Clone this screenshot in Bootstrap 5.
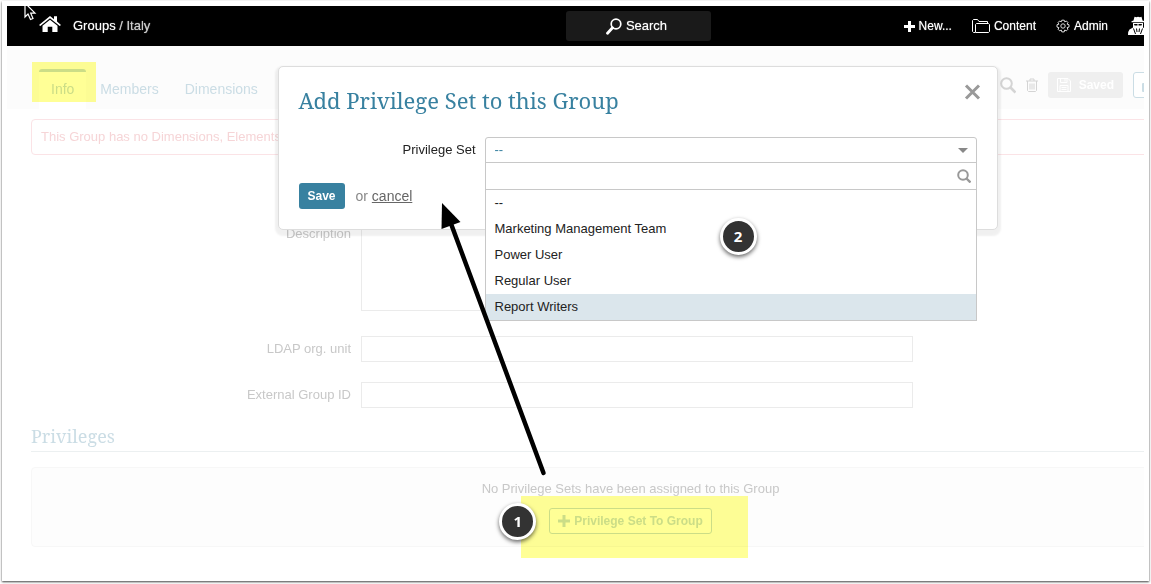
<!DOCTYPE html>
<html lang="en">
<head>
<meta charset="utf-8">
<meta name="viewport" content="width=device-width, initial-scale=1">
<title>Groups / Italy</title>
<link href="https://cdn.jsdelivr.net/npm/bootstrap@5.3.0/dist/css/bootstrap.min.css" rel="stylesheet">
<style>
body { font-family: "Liberation Sans", Arial, sans-serif; font-size: 13px; line-height: 20px; color: #222; background: #fff; }
a { text-decoration: none; }
svg { display: block; flex: none; }
.serif { font-family: "Noto Serif", "Droid Serif", "DejaVu Serif Condensed", "DejaVu Serif", serif; font-weight: 400; }

/* framed capture with the page clipped at its right edge */
.shot { min-height: calc(100vh - 4px); margin: 1px 2px 3px; padding: 5px; background: #fff; box-shadow: 0 1px 2px rgba(0,0,0,.75); }
.viewport { overflow: hidden; }
.canvas { margin-right: -126px; min-height: 564px; }

.topbar { height: 40px; background: #000; color: #fff; padding: 0 122px 0 32px; text-shadow: 0 0 1px rgba(255,255,255,.7); }
.topbar a { color: #fff; }
.topbar .here { color: #ccc; }
.topbar-side { flex: 1 1 0; }
.topbar-side.start { margin-right: 90px; }
.main-nav { font-size: 12px; gap: 20px; }
.search-btn { width: 145px; height: 30px; background: #1a1a1a; color: #fff; border: 0; border-radius: 3px; text-shadow: inherit; gap: 4px; padding: 0 10px 0 6px; }
.pointer { left: 17px; top: -4px; }

.tabbar { background: #fcfcfc; height: 63px; padding: 0 24px 0 32px; }
.tab { font-size: 14px; line-height: 20px; padding: 10px 12px; color: #cbdde5; height: 40px; }
.tab.on { background: #fff; border-top: 3px solid #cbdde5; border-radius: 3px 3px 0 0; padding-top: 7px; }
.marker { background: #ffff96; mix-blend-mode: multiply; pointer-events: none; }
.tab .marker { left: -7px; top: -10px; width: 64px; height: 40px; }
.tools { color: #d4d4d4; gap: 10px; padding-bottom: 11px; }
.pill { height: 26px; font-size: 12px; font-weight: 700; border-radius: 3px; border: 1px solid transparent; padding: 0 8px; line-height: 20px; }
.saved { background: #efefef; color: #fff; }
.lock-btn { width: 113px; border-color: #cbdde5; background: #fff; color: #cbdde5; }

.main { padding: 10px 40px 0 24px; }
.notice { border: 1px solid #fbe3e6; border-radius: 4px; color: #f6d5d7; padding: 7px 9px; line-height: 20px; }
.fields { margin-top: 66px; gap: 20px; }
.fields label { width: 320px; text-align: right; padding-top: 3px; color: #c8c8c8; }
.fields .form-control { width: 552px; height: 26px; min-height: 26px; padding: 2px 8px; border-color: #ebebeb; border-radius: 0; font-size: 13px; }
.fields textarea.form-control { height: 90px; margin-bottom: 5px; resize: none; }
.section-title { font-size: 18px; line-height: 28px; color: #cbdde5; border-bottom: 1px solid #ecf0f1; margin: 14px -40px 15px 0; padding-bottom: 1px; }
.empty { border: 1px solid #f7f7f7; border-radius: 4px; padding: 11px 0 12px; color: #c8c8c8; background: #fdfdfd; }
.add-btn { border-color: #cbdde5; background: #fff; color: #cbdde5; margin-top: 9px; }
.add-wrap .marker { left: -28px; top: -3px; width: 227px; height: 62px; }
.step { width: 37px; height: 37px; border-radius: 50%; border: 3px solid #fff; background: #333; color: #fff; font: 700 15px/30px "Open Sans", "Noto Sans", sans-serif; text-align: center; box-shadow: 0 2px 4px rgba(0,0,0,.6); }
.add-wrap .step { left: -50px; top: 4px; }

.overlay { top: 60px; left: 0; right: 2px; }
.dialog { width: 720px; height: 164px; padding: 17px 20px 20px; background: #fff; border: 1px solid #ddd; border-radius: 5px; box-shadow: 0 3px 2px 3px rgba(0,0,0,.06); }
.dialog h1 { font-size: 22px; line-height: 32px; color: #3881a0; margin: 0; }
.x-btn { border: 0; background: none; padding: 0; margin-right: -4px; color: #999; }
.set-row { margin-top: 21px; }
.set-row label { width: 177px; text-align: right; line-height: 26px; }
.picker { width: 492px; }
.picker .form-select { height: 26px; padding: 0 30px 0 9px; font-size: 13px; line-height: 24px; color: #3881a0; border-color: #c8c8c8; border-radius: 3px 3px 0 0; background-image: none; }
.caret { right: 9px; top: 11px; color: #888; pointer-events: none; }
.menu { top: 25px; left: 0; right: 0; border: 1px solid #c8c8c8; background: #fff; }
.menu .form-control { height: 27px; min-height: 27px; padding: 0 30px 0 9px; font-size: 13px; border: 0; border-bottom: 1px solid #c8c8c8; border-radius: 0; }
.menu .glass { right: 5px; top: 6px; color: #999; }
.menu .list-group-item { border: 0; padding: 3px 9px; line-height: 20px; color: #222; }
.menu .list-group-item.picked { background: #dbe6ec; }
.menu .step { left: 234px; top: 55px; }
.actions { margin-top: 20px; font-size: 14px; color: #888; gap: 11px; }
.actions .pill { background: #3881a0; color: #fff; width: 46px; height: 26px; padding: 0; }
.actions a { color: #666; text-decoration: underline; }
.pointing { left: 158px; top: 134px; pointer-events: none; }
</style>
</head>
<body>
<div class="shot">
<div class="viewport">
<div class="canvas position-relative">

  <header class="topbar position-relative d-flex align-items-center">
    <svg class="pointer position-absolute" width="13" height="19" viewBox="0 0 13 19"><path d="M1 1v14l3-3 2.500 5.500 2.500-1-2.300-5.300H11z" fill="#000" stroke="#fff" stroke-width="1.200"/></svg>
    <nav class="topbar-side start d-flex align-items-center" aria-label="Breadcrumb">
      <a href="#" aria-label="Home"><svg class="mb-1" width="22" height="18" viewBox="0 0 22 20" preserveAspectRatio="none" fill="#fff"><path d="M11 1 0 11l1.300 1.300L11 3.600l9.700 8.700L22 11l-4-3.700V1.500h-3v3.100z"/><path d="M11 5.300 3.500 12v7h5.200v-6h4.600v6h5.200v-7z"/></svg></a>
      <span class="ms-2 ps-1"><a href="#">Groups</a> <span class="here">/ Italy</span></span>
    </nav>
    <button type="button" class="search-btn d-flex align-items-center justify-content-center">
      <svg width="16" height="17" viewBox="0 0 16 17" fill="none" stroke="#fff"><circle cx="10" cy="6" r="4.800" stroke-width="1.700"/><path d="m6.500 9.800-5 5.500" stroke-width="2.800" stroke-linecap="round"/></svg>Search</button>
    <nav class="main-nav topbar-side d-flex align-items-center justify-content-end" aria-label="Main">
      <a href="#" class="d-flex align-items-center gap-1"><svg width="11" height="11" viewBox="0 0 11 11"><path d="M5.500 0v11M0 5.500h11" stroke="#fff" stroke-width="3"/></svg>New...</a>
      <a href="#" class="d-flex align-items-center gap-1"><svg width="18" height="15" viewBox="0 0 18 15" fill="none" stroke="#fff"><path d="M3 13.500H1.500l-1-1v-11l1-1h4l1.500 2h8.500v2M3.500 13.500v-8l1-1h12l1 1v7l-1 1z"/></svg>Content</a>
      <a href="#" class="d-flex align-items-center gap-1"><svg width="14" height="14" viewBox="0 0 14 14" fill="none" stroke="#ddd"><circle cx="7" cy="7" r="2.200"/><path d="M5.800.5h2.400l.5 1.600 1.700-.8 1.500 1.500-.8 1.700 1.900.5v2.400l-1.900.5.8 1.700-1.500 1.500-1.700-.8-.5 1.900H5.800l-.5-1.900-1.700.8-1.500-1.500.8-1.700L1 7.400V5l1.900-.5-.8-1.700 1.500-1.500 1.700.8z" transform="translate(0 .7)"/></svg>Admin</a>
      <a href="#" aria-label="Account"><svg width="20" height="20" viewBox="0 0 20 20" fill="#fff"><path d="M5.500 4.500 6.500.8q2 .9 3.500 0 2 .9 3.500 0l1 3.700 2 .7v1H3.500v-1z"/><path d="M5 7h10v4.500l3.500 2Q20 15 20 19H0q0-4 1.500-5.500L5 11.500z"/><path d="M6 8h3.500v1.500h-3zM10.500 8H14l-.5 1.500h-3z" fill="#000"/><path d="m5.500 12.500 2 5.500M14.500 12.500l-2 5.500M8.500 12.500l.5 3.500M11.500 12.500 11 16" fill="none" stroke="#000"/></svg></a>
    </nav>
  </header>

  <div class="tabbar d-flex align-items-end">
    <nav class="d-flex" style="gap:2px" aria-label="Group sections">
      <a href="#" class="tab on position-relative">Info<span class="marker position-absolute"></span></a>
      <a href="#" class="tab">Members</a>
      <a href="#" class="tab">Dimensions</a>
    </nav>
    <div class="tools ms-auto d-flex align-items-center">
      <svg width="16" height="17" viewBox="0 0 16 17" fill="none" stroke="currentColor" stroke-width="2"><circle cx="6.500" cy="6.500" r="5.300"/><path d="m10.500 10.500 5 5" stroke-width="2.600"/></svg>
      <svg width="12" height="14" viewBox="0 0 12 14" fill="none" stroke="currentColor"><path d="M0 3h12M4 3V1h4v2M1.500 3v9.500l1 1h7l1-1V3M4 5.500v6M6 5.500v6M8 5.500v6"/></svg>
      <button type="button" class="pill saved d-flex align-items-center"><svg class="me-2" width="14" height="14" viewBox="0 0 14 14" fill="none" stroke="#fff"><path d="M.5.500h10.500l2.500 2.500v10.500H.5zM3.500.500v4h6.500v-4M8 1v2.500M3 13.500V7.500h8v6M4.500 9.500h5M4.500 11.500h5"/></svg>Saved</button>
      <button type="button" class="pill lock-btn" aria-label="Lock"><svg width="12" height="14" viewBox="0 0 12 14"><path d="M3 6V3.500a3 3 0 0 1 6 0V6" fill="none" stroke="#cbdde5" stroke-width="2"/><rect y="5" width="12" height="9" rx="1" fill="#cbdde5"/></svg></button>
    </div>
  </div>

  <main class="main">
    <div class="notice">This Group has no Dimensions, Elements</div>

    <form class="fields d-flex flex-column">
      <div class="d-flex" style="gap:10px"><label for="desc">Description</label><textarea id="desc" class="form-control"></textarea></div>
      <div class="d-flex" style="gap:10px"><label for="ldap">LDAP org. unit</label><input id="ldap" type="text" class="form-control"></div>
      <div class="d-flex" style="gap:10px"><label for="ext">External Group ID</label><input id="ext" type="text" class="form-control"></div>
    </form>

    <h2 class="section-title serif">Privileges</h2>
    <div class="empty d-flex flex-column align-items-center">
      <div>No Privilege Sets have been assigned to this Group</div>
      <div class="add-wrap position-relative">
        <button type="button" class="pill add-btn d-flex align-items-center gap-1"><svg width="12" height="12" viewBox="0 0 12 12"><path d="M6 0v12M0 6h12" stroke="currentColor" stroke-width="3"/></svg>Privilege Set To Group</button>
        <span class="marker position-absolute"></span>
        <span class="step position-absolute">1</span>
      </div>
    </div>
  </main>

  <div class="overlay position-absolute">
    <section class="dialog position-relative mx-auto" role="dialog" aria-labelledby="dlg-title">
      <div class="d-flex align-items-start justify-content-between">
        <h1 id="dlg-title" class="serif">Add Privilege Set to this Group</h1>
        <button type="button" class="x-btn" aria-label="Close"><svg width="17" height="16" viewBox="0 0 17 16" fill="none" stroke="currentColor" stroke-width="3"><path d="m2 1.500 13 13M15 1.500l-13 13"/></svg></button>
      </div>
      <div class="set-row d-flex justify-content-between">
        <label for="pset">Privilege Set</label>
        <div class="picker position-relative">
          <select id="pset" class="form-select"><option>--</option></select>
          <svg class="caret position-absolute" width="10" height="5" viewBox="0 0 10 5"><path d="M0 0h10L5 5z" fill="currentColor"/></svg>
          <div class="menu position-absolute">
            <input type="text" class="form-control" aria-label="Filter privilege sets">
            <svg class="glass position-absolute" width="14" height="14" viewBox="0 0 14 14" fill="none" stroke="currentColor" stroke-width="2"><circle cx="6" cy="6" r="4.800"/><path d="m9.500 9.500 4 4" stroke-width="2.400"/></svg>
            <div class="list-group list-group-flush">
              <button type="button" class="list-group-item text-start">--</button>
              <button type="button" class="list-group-item text-start">Marketing Management Team</button>
              <button type="button" class="list-group-item text-start">Power User</button>
              <button type="button" class="list-group-item text-start">Regular User</button>
              <button type="button" class="list-group-item text-start picked">Report Writers</button>
            </div>
            <span class="step position-absolute">2</span>
          </div>
        </div>
      </div>
      <div class="actions d-flex align-items-center"><button type="button" class="pill">Save</button><span>or <a href="#">cancel</a></span></div>
      <svg class="pointing position-absolute" width="112" height="276" viewBox="0 0 112 276"><path d="m13 20 93.500 252" stroke="#000" stroke-width="4.500" stroke-linecap="round"/><path d="M5 2 23.500 21 4.500 28z"/></svg>
    </section>
  </div>

</div>
</div>
</div>
<script src="https://cdn.jsdelivr.net/npm/bootstrap@5.3.0/dist/js/bootstrap.bundle.min.js"></script>
</body>
</html>
